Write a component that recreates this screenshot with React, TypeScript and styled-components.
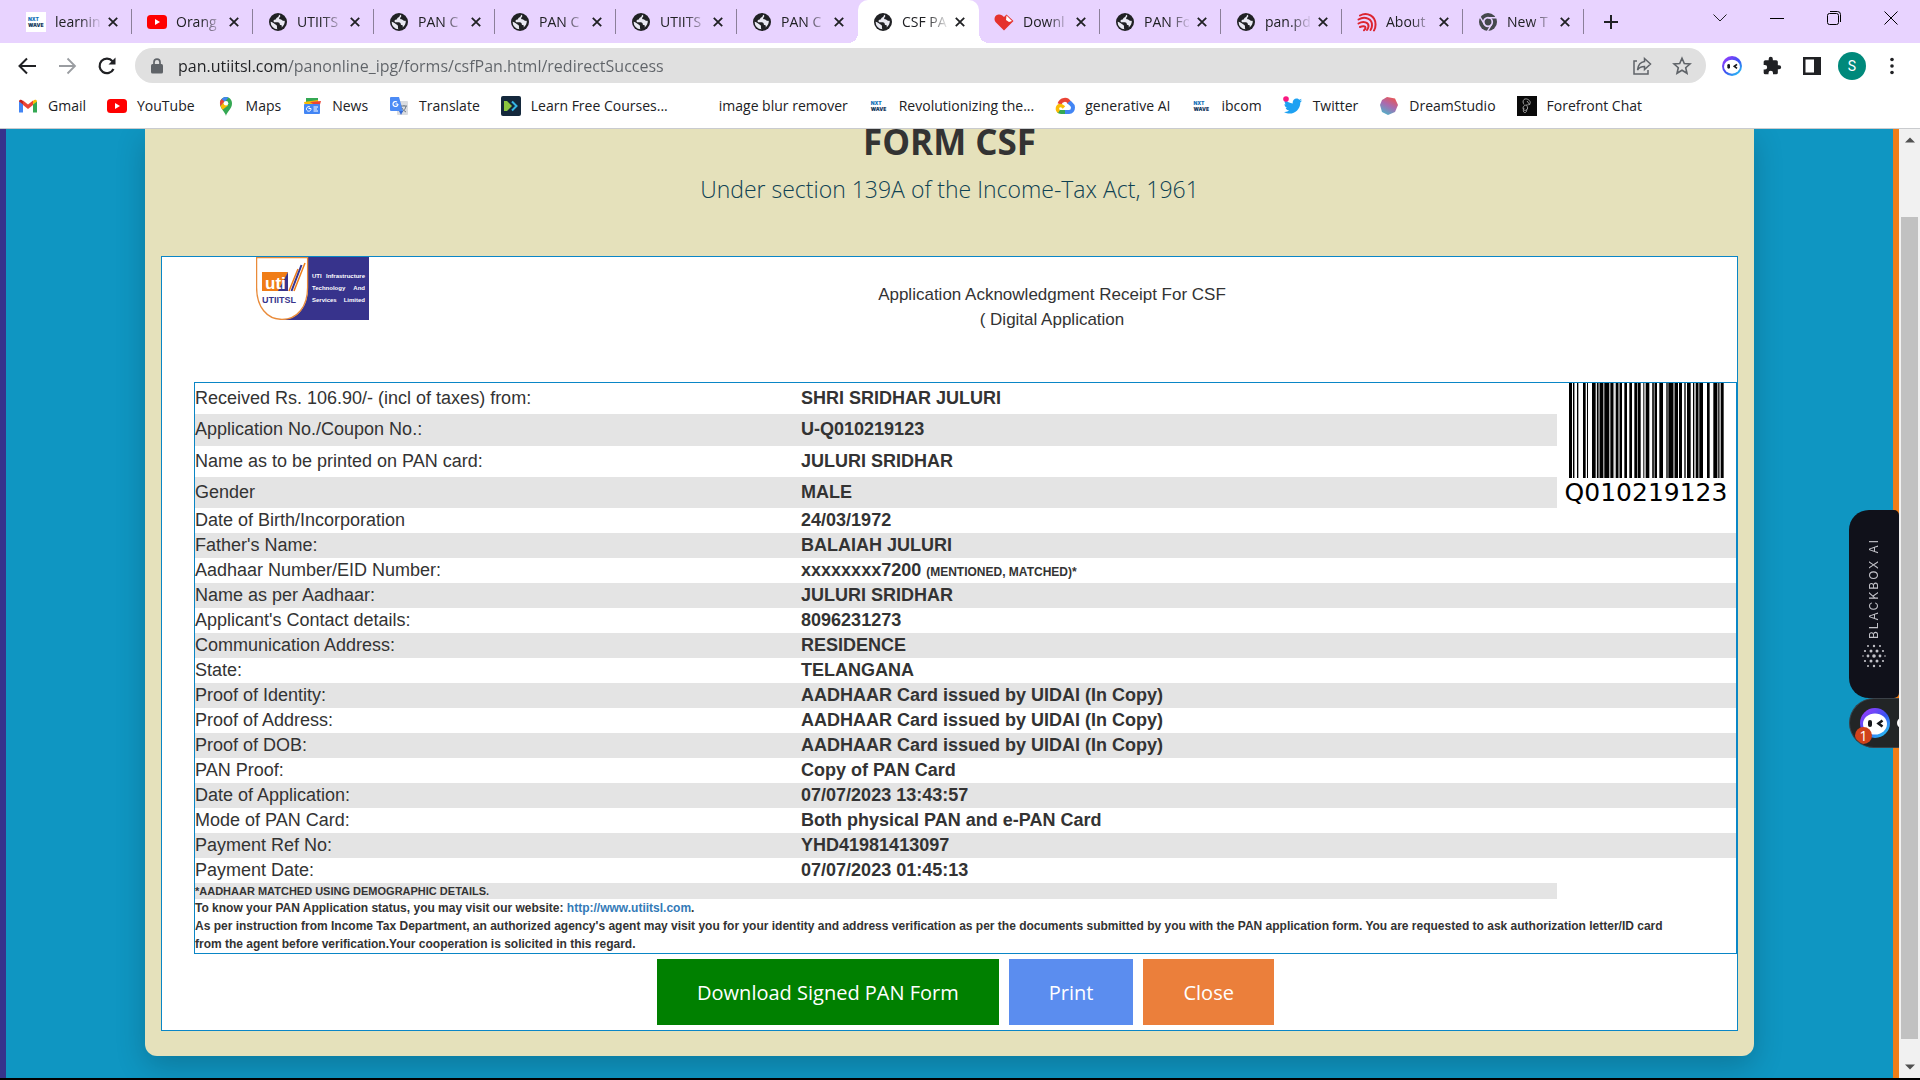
import React from "react";
import styled, { createGlobalStyle, css } from "styled-components";

const UI = `"Open Sans", "Noto Sans", sans-serif`;
const ARIAL = `"Liberation Sans", Arial, sans-serif`;

const GlobalStyle = createGlobalStyle`
  *, *::before, *::after { box-sizing: border-box; }
  body { margin: 0; background: #000; font-family: ${UI}; }
  button { font: inherit; border: 0; padding: 0; background: none; color: inherit; cursor: pointer; }
  svg { display: block; flex: none; }
`;

const Screen = styled.div`
  display: flex;
  flex-direction: column;
  height: 100vh;
  padding-bottom: 2px;
  overflow: hidden;
`;

/* ---------- browser chrome ---------- */

const TabStrip = styled.div`
  display: flex;
  height: 43px;
  padding-left: 11px;
  background: #e8d3ff;
  color: #202124;
`;

const Tab = styled.div<{ $active?: boolean; $divider?: boolean }>`
  display: flex;
  align-items: center;
  width: 121px;
  padding: 0 10px 0 15px;
  position: relative;
  font-size: 14px;
  ${(p) =>
    p.$divider &&
    css`
      &::after {
        content: "";
        position: absolute;
        right: 0;
        top: 9px;
        width: 1px;
        height: 25px;
        background: #8b7f99;
      }
    `}
  ${(p) =>
    p.$active &&
    css`
      background: #fff;
      border-radius: 10px 10px 0 0;
      &::before,
      &::after {
        content: "";
        position: absolute;
        bottom: 0;
        width: 10px;
        height: 10px;
      }
      &::before {
        left: -10px;
        background: radial-gradient(circle at 0 0, transparent 10px, #fff 10px);
      }
      &::after {
        right: -10px;
        background: radial-gradient(circle at 100% 0, transparent 10px, #fff 10px);
      }
    `}
`;

const TabTitle = styled.span`
  flex: 1;
  min-width: 0;
  margin: 0 4px 0 9px;
  line-height: 20px;
  white-space: nowrap;
  mask-image: linear-gradient(90deg, #000 55%, transparent 105%);
`;

const IconButton = styled.button<{ $size?: number }>`
  display: flex;
  align-items: center;
  justify-content: center;
  flex: none;
  width: ${(p) => p.$size ?? 20}px;
  height: ${(p) => p.$size ?? 20}px;
`;

const NewTab = styled(IconButton)`
  align-self: center;
  margin-left: 17px;
`;

const WindowControls = styled.div`
  display: flex;
  align-items: center;
  height: 36px;
  margin-left: auto;
  padding-right: 1px;
`;

const WindowButton = styled.button`
  display: flex;
  align-items: center;
  justify-content: center;
  width: 57px;
  height: 36px;
`;

const Toolbar = styled.div`
  display: flex;
  align-items: center;
  height: 45px;
  padding: 0 18px 0 17px;
  background: #fff;
  color: #202124;
`;

const NavButtons = styled.div`
  display: flex;
  gap: 20px;
  margin-right: 18px;
`;

const AddressBar = styled.form`
  display: flex;
  align-items: center;
  flex: 1;
  height: 35px;
  padding: 0 14px 0 15px;
  gap: 20px;
  border-radius: 18px;
  background: #e0e0e0;
  color: #5f6368;
`;

const AddressInput = styled.input`
  flex: 1;
  min-width: 0;
  height: 30px;
  margin-left: -6px;
  padding: 0;
  border: 0;
  outline: 0;
  font: 16px/24px ${UI};
  color: #5f6368;
  background: linear-gradient(90deg, #202124 111px, #5f6368 111px);
  -webkit-background-clip: text;
  background-clip: text;
  -webkit-text-fill-color: transparent;
`;

const Extensions = styled.div`
  display: flex;
  align-items: center;
  gap: 20px;
  margin-left: 16px;
`;

const Avatar = styled.button`
  width: 28px;
  height: 28px;
  margin: 0 -4px;
  border-radius: 50%;
  background: #00897b;
  color: #fff;
  font-family: Roboto, sans-serif;
  font-size: 14px;
`;

const Bookmarks = styled.nav`
  display: flex;
  align-items: center;
  height: 41px;
  padding: 0 18px 5px;
  gap: 21px;
  border-bottom: 1px solid #c9cbce;
  background: #fff;
`;

const Bookmark = styled.a`
  display: flex;
  align-items: center;
  gap: 10px;
  font-size: 14px;
  line-height: 20px;
  color: #202124;
  text-decoration: none;
  white-space: nowrap;
`;

const BlankIcon = styled.span`
  width: 20px;
  height: 20px;
`;

/* ---------- page ---------- */

const Viewport = styled.div`
  display: flex;
  flex: 1;
  min-height: 0;
  position: relative;
`;

const Page = styled.main`
  flex: 1;
  min-width: 0;
  overflow: hidden;
  padding: 0 139px;
  border-left: 6px solid #37338c;
  border-right: 6px solid #f07d17;
  background: #0f96c2;
  color: #333;
`;

const Card = styled.section`
  padding: 1px 16px 25px;
  border-radius: 0 0 12px 12px;
  background: #e5e1bb;
  box-shadow: 0 10px 30px rgba(0, 0, 0, 0.2);
`;

const Title = styled.h1`
  margin: 0;
  font-size: 35px;
  font-weight: 700;
  line-height: 24px;
  text-align: center;
`;

const Subtitle = styled.p`
  margin: 15px 0 47px;
  font-size: 23px;
  font-weight: 300;
  line-height: 40px;
  text-align: center;
  color: #0f4253;
`;

const Receipt = styled.div`
  padding-left: 32px;
  border: 1px solid #0a86c6;
  background: #fff;
  font-family: ${ARIAL};
`;

const ReceiptHeader = styled.header`
  display: flex;
  height: 125px;
`;

const LogoBox = styled.div`
  width: 173px;
  padding-left: 62px;
`;

const ReceiptTitle = styled.div`
  flex: 1;
  padding-top: 25px;
  font-size: 17px;
  line-height: 25px;
  text-align: center;
`;

const Details = styled.div`
  border: 1px solid #0a86c6;
`;

const Table = styled.table`
  width: 100%;
  border-collapse: collapse;
  table-layout: fixed;
  font-size: 18px;
  line-height: 25px;
`;

const LabelCol = styled.col`
  width: 39.33%;
`;
const BarcodeCol = styled.col`
  width: 179px;
`;

const Row = styled.tr<{ $tall?: boolean }>`
  height: ${(p) => (p.$tall ? 31 : 25)}px;
`;

const shade = css<{ $shaded?: boolean }>`
  padding: 0;
  text-align: left;
  background: ${(p) => (p.$shaded ? "#e4e4e4" : "#fff")};
`;

const Label = styled.th<{ $shaded?: boolean }>`
  ${shade}
  font-weight: 400;
`;

const Value = styled.td<{ $shaded?: boolean }>`
  ${shade}
  font-weight: 700;
`;

const Small = styled.small`
  font-size: 12px;
  line-height: 12px;
`;

const BarcodeCell = styled.td`
  padding: 0 8px 0 7px;
  vertical-align: top;
  text-align: center;
`;

const Barcode = styled.figure`
  display: flex;
  flex-direction: column;
  align-items: center;
  margin: 0;
  font: 25px/30px "DejaVu Sans", sans-serif;
  color: #000;
`;

const Strip = styled.td`
  padding: 0;
  background: #e4e4e4;
  font-size: 11px;
  font-weight: 700;
  line-height: 16px;
`;

const Note = styled.p`
  margin: 0;
  font-size: 12px;
  font-weight: 700;
  line-height: 18px;
  a {
    color: #337ab7;
    text-decoration: none;
  }
`;

const Actions = styled.div`
  display: flex;
  justify-content: center;
  gap: 10px;
  padding: 5px 0;
`;

const ActionButton = styled.button<{ $color: string }>`
  height: 66px;
  padding: 0 40px;
  background: ${(p) => p.$color};
  color: #fff;
  font-family: ${UI};
  font-size: 20px;
`;

const ScrollTrack = styled.div`
  display: flex;
  flex-direction: column;
  align-items: center;
  width: 21px;
  padding: 8px 2px;
  background: #f1f1f1;
`;

const ScrollThumb = styled.div`
  width: 17px;
  flex: 1;
  margin: 74px 0 25px;
  background: #c1c1c1;
`;

/* ---------- floating widgets ---------- */

const Widgets = styled.aside`
  position: absolute;
  right: 21px;
  top: 381px;
  width: 50px;
`;

const BlackboxTab = styled.button`
  display: flex;
  flex-direction: column;
  align-items: center;
  gap: 5px;
  width: 50px;
  height: 188px;
  padding-top: 28px;
  border-radius: 20px 5px 5px 20px;
  background: #10111a;
  color: #c3c3c9;
`;

const BlackboxLabel = styled.span`
  writing-mode: vertical-rl;
  transform: rotate(180deg);
  font: 12px/14px Inter, sans-serif;
  letter-spacing: 2px;
`;

const ChatTab = styled.button`
  display: flex;
  align-items: center;
  position: relative;
  width: 50px;
  height: 50px;
  padding-left: 10px;
  overflow: hidden;
  border: 1px solid #3b4148;
  border-right: 0;
  border-radius: 25px 0 0 25px;
  background: #222526;
  &::after {
    content: "";
    position: absolute;
    right: -7px;
    top: 19px;
    width: 9px;
    height: 10px;
    border-radius: 50%;
    background: #fff;
  }
`;

const ChatBadge = styled.span`
  position: absolute;
  left: 5px;
  top: 28px;
  width: 17px;
  height: 17px;
  border-radius: 50%;
  background: #d0421b;
  color: #fff;
  font: 14px/17px ${UI};
  text-align: center;
`;

/* ---------- drawings ---------- */

const Globe = () => (
  <svg width="20" height="20" viewBox="0 0 20 20">
    <circle cx="10" cy="10" r="9" fill="#202124" />
    <path d="M11.2 2.8c-.8 1.4-.4 2.2-2 2.6-1.4.4-.6 1.8-1.8 2.2-1.2.3-2 .6-1.8 1.8.4 1.4 3.4.4 5 1 1.800.8.6 2.4 2.2 2.6 1.2.2 1.2 1.2.8 2.4a8 8 0 0 0 3.2-6.6c-1 .4-2.400-.2-3-.8-.8-.8-2-.4-2.600-1.200-.6-1 .9-1.200 1-2.200 0-.8.400-1.200-1-1.800Z" fill="#e9e9f2" />
    <path d="M2.600 9.800c1 .2 3 1 4.200 2.200 1 1 2.200 1 2.200 2.400 0 1.200-.2 1.800.6 2.900a7.400 7.400 0 0 1-7-7.500Z" fill="#e9e9f2" />
  </svg>
);

const YouTube = () => (
  <svg width="20" height="20" viewBox="0 0 20 20">
    <rect y="3" width="20" height="14" rx="3.500" fill="#f00" />
    <path d="m8 7 5 3-5 3Z" fill="#fff" />
  </svg>
);

const WaveText = styled.span`
  display: flex;
  flex-direction: column;
  justify-content: center;
  flex: none;
  width: 20px;
  height: 20px;
  padding-left: 2px;
  background: #fff;
  font: 900 5px/6px Inter, sans-serif;
  color: #173a5e;
  b {
    color: #1673b9;
  }
`;

const NxtWave = () => (
  <WaveText>
    <b>NXT</b>
    <span>WAVE</span>
  </WaveText>
);

const HeartPdf = () => (
  <svg width="20" height="20" viewBox="0 0 20 20">
    <path d="M10 18.500 1.500 10C-.5 7.500.5 3 4.500 2.500c2.500-.3 4 1 5.500 2.500l2.500-2.500L19.500 9Z" fill="#e5322d" />
    <path d="m12.500 3.500 5.500 5.500-3 1-3-2Z" fill="#fff" />
  </svg>
);

const Airtel = () => (
  <svg width="20" height="20" viewBox="0 0 20 20" fill="none" stroke="#dc2430" strokeLinecap="round" strokeWidth="2">
    <path d="M3 3.500C10-.5 19 4 18.500 13c0 2-.5 4-1.500 5.500" />
    <path d="M1.500 7.500C8 3.500 15.500 7 15 13.500c0 1.500-.5 3-1.500 4.500" />
    <path d="M1.500 11.500c5-3 10.500-1 10 3-.2 1.500-.8 2.500-1.500 3.500" />
    <path d="M3 15c3-1.500 5.500-.8 5.500.8 0 1-.5 1.700-1.500 2.500" />
  </svg>
);

const ChromeIcon = () => (
  <svg width="20" height="20" viewBox="0 0 20 20">
    <circle cx="10" cy="10" r="9" fill="#45484c" />
    <circle cx="10" cy="10" r="4.300" fill="#45484c" stroke="#e8d3ff" strokeWidth="1.700" />
    <path d="M10 5.700h8.200M6.300 12.200 2.200 5.200M13.700 12.200l-4.200 7" stroke="#e8d3ff" strokeWidth="1.400" />
    <circle cx="10" cy="10" r="2.600" fill="#45484c" />
  </svg>
);

const CloseX = () => (
  <svg width="10" height="10" viewBox="0 0 10 10" stroke="#202124" strokeWidth="1.800">
    <path d="m.8.800 8.400 8.400M9.200.800.800 9.200" />
  </svg>
);

const Gmail = () => (
  <svg width="20" height="20" viewBox="0 0 20 20">
    <path d="M1 5v11.500h4V8Z" fill="#4285f4" />
    <path d="M19 5v11.500h-4V8Z" fill="#34a853" />
    <path d="M1 5.500 5 8.500V5C3.500 3 1 3.500 1 5.500Z" fill="#c5221f" />
    <path d="M19 5.500 15 8.500V5c1.500-2 4-1.500 4 .5Z" fill="#fbbc04" />
    <path d="m5 4.500 5 4 5-4v4.500l-5 4-5-4Z" fill="#ea4335" />
  </svg>
);

const MapsPin = () => (
  <svg width="20" height="20" viewBox="0 0 20 20">
    <path d="M10 20c-.6-4-6-7-6-12.500C4 3.500 6.800 1 10 1s6 2.500 6 6.500C16 13 10.600 16 10 20Z" fill="#34a853" />
    <path d="M5.500 3.200C6.800 1.800 8.300 1 10 1c1 0 1.800.2 2.500.5L5 10C4 8 3.500 5.500 5.500 3.200Z" fill="#4285f4" />
    <path d="M5.500 3 8.500 5.500 4.600 10C3.500 8 3.600 5 5.500 3Z" fill="#ea4335" />
    <path d="m12 9.500-5.400 4.200c-.9-1.200-1.600-2.300-2-3.700L8 6Z" fill="#fbbc04" />
    <circle cx="10" cy="7.300" r="2.300" fill="#fff" />
  </svg>
);

const NewsIcon = () => (
  <svg width="20" height="20" viewBox="0 0 20 20">
    <rect x="4" y="2" width="12" height="8" fill="#34a853" />
    <path d="m2 6 14-2 1 6H3Z" fill="#fbbc04" />
    <path d="m8 6 11-1-2 7Z" fill="#ea4335" />
    <rect x="2" y="8" width="16" height="10" rx="1" fill="#4285f4" />
    <path d="M9 12.500H6.500M9 12.500A2.300 2.300 0 1 1 8 11M11.500 11H16M11.500 13H15M11.500 15H16" stroke="#fff" fill="none" />
  </svg>
);

const TranslateIcon = () => (
  <svg width="20" height="20" viewBox="0 0 20 20" fill="none">
    <rect x="8" y="5" width="11" height="14" rx="1" fill="#dadce0" />
    <path d="M2 1h8l4 14H2a1 1 0 0 1-1-1V2a1 1 0 0 1 1-1Z" fill="#4c8bf5" />
    <path d="M9 8H6.500M9 8a2.500 2.500 0 1 1-1-2" stroke="#fff" strokeWidth="1.200" />
    <path d="M12 10h6M15 9v1M17 10c-.5 3-2 4.500-4 6M13 12c1 2 2.500 3 4 4" stroke="#6f7a86" />
    <path d="m10 15h4l-2 4Z" fill="#3367d6" />
  </svg>
);

const CoursesIcon = () => (
  <svg width="20" height="20" viewBox="0 0 20 20">
    <rect width="20" height="20" rx="2" fill="#14283c" />
    <path d="M3 5h3l5 5-5 5H3Z" fill="#8bc53f" />
    <path d="m11 5.500 4.500 4.500-4.500 4.500" fill="none" stroke="#35b6e6" strokeWidth="2" />
  </svg>
);

const CloudIcon = () => (
  <svg width="20" height="20" viewBox="0 0 20 20" fill="none" strokeWidth="4">
    <path d="M4.500 8C6 3.500 12 2 14.500 7" stroke="#ea4335" />
    <path d="M14 6c1.500 2 4 2.500 4 5.500 0 2.500-1.500 4.500-4 4.500h-4" stroke="#4285f4" />
    <path d="M10 16H6c-1 0-2-.3-2.500-.8" stroke="#34a853" />
    <path d="M4 15.500C1.500 14 2 9.500 5.500 9.500c1.500 0 2.500 1 3.500 2" stroke="#fbbc04" strokeWidth="3.500" />
  </svg>
);

const TwitterIcon = () => (
  <svg width="20" height="20" viewBox="0 0 20 20">
    <path d="M1 16c2.200.2 3.800-.3 5.200-1.400-1.700-.1-3-1.100-3.500-2.600h1.600C2.600 11.400 1.500 10 1.500 8l1.600.5C1.600 7.300 1.200 5.300 2.100 3.600 4.100 6 6.800 7.300 9.800 7.500 9.200 4.800 11 2.500 13.500 2.500c1.100 0 2.100.5 2.800 1.200l2.400-.9-1.600 2.100 2.100-.5-1.900 2C17.500 14.500 9 20.500 1 16Z" fill="#1da1f2" />
    <circle cx="3" cy="3" r="2.800" fill="#f91880" />
  </svg>
);

const DreamIcon = () => (
  <svg width="20" height="20" viewBox="0 0 20 20">
    <defs>
      <linearGradient id="dream" x1="0.800" y1="0" x2="0.300" y2="1">
        <stop offset="0" stopColor="#f0524b" />
        <stop offset="0.500" stopColor="#a86bb0" />
        <stop offset="1" stopColor="#4fb3c9" />
      </linearGradient>
    </defs>
    <path d="m8 1 8 1.500L19 9l-3 7-7 3-6-3-2-7 2-5Z" fill="url(#dream)" />
  </svg>
);

const ForefrontIcon = () => (
  <svg width="20" height="20" viewBox="0 0 20 20">
    <rect width="20" height="20" fill="#0a0a0a" />
    <path d="M7 3.500c2-1.500 5 0 6 2s-1 3.500-3 3.500-4 1-4 3 2 3 3.500 2 1.500-3 0-4.500M7 3.500C5.500 5 6 7 7 8.500M10 5l3 4M7 12c-1 2-1 4 .5 4.500S10 15 9.500 13.500" fill="none" stroke="#a0a0a0" strokeWidth="1" />
  </svg>
);

const FaceIcon = ({ size = 20, id }: { size?: number; id: string }) => (
  <svg width={size} height={size} viewBox="0 0 30 30">
    <defs>
      <linearGradient id={id} x1="0.200" y1="0.100" x2="0.900" y2="0.900">
        <stop offset="0" stopColor="#8a3ffc" />
        <stop offset="0.500" stopColor="#3b52f0" />
        <stop offset="1" stopColor="#27c4f5" />
      </linearGradient>
    </defs>
    <circle cx="15" cy="15" r="15" fill={`url(#${id})`} />
    <ellipse cx="15" cy="16" rx="12" ry="10.500" fill="#fff" />
    <rect x="8" y="12" width="4" height="7" rx="2" fill="#15171c" />
    <path d="m22.500 12.500-4 3 4 3" fill="none" stroke="#15171c" strokeWidth="2.600" />
  </svg>
);

const UtiLogo = () => (
  <svg width="113" height="63" viewBox="0 0 113 63" role="img" aria-label="UTIITSL">
    <rect width="113" height="63" fill="#37338c" />
    <path d="M0 0h52v30C52 50 42 62.500 26 62.500V63H0Z" fill="#fff" />
    <path d="M.6.500h51v30C51.600 50 41 62.400 26 62.400S.6 50 .6 30.500Z" fill="#fff" stroke="#e98b3a" strokeWidth="1.300" />
    <path d="M6 15h26L24 34H6Z" fill="#f07d17" />
    <path d="M32 15v19H22Z" fill="#37338c" />
    <path d="M33 34 42 12M38 34 49 6" stroke="#f07d17" strokeWidth="1.500" />
    <path d="m35.500 34 10-26" stroke="#37338c" strokeWidth="2" />
    <g fontFamily="Liberation Sans" fontWeight="700">
      <text x="9" y="32" fontSize="17" fill="#fff">uti</text>
      <text x="6" y="46" fontSize="9" fill="#37338c">UTIITSL</text>
      <g fontSize="6" fill="#fff">
        <text x="56" y="21">UTI</text>
        <text x="109" y="21" textAnchor="end">Infrastructure</text>
        <text x="56" y="33">Technology</text>
        <text x="109" y="33" textAnchor="end">And</text>
        <text x="56" y="45">Services</text>
        <text x="109" y="45" textAnchor="end">Limited</text>
      </g>
    </g>
  </svg>
);

/* [start, width] of each bar, three units to a pixel */
const BARS = [
  [0, 9], [12, 4], [24, 4], [42, 8], [54, 3], [69, 11], [84, 4], [92, 10], [106, 15], [124, 9],
  [140, 8], [152, 7], [166, 8], [181, 8], [196, 8], [207, 8], [223, 3], [230, 11], [250, 4],
  [257, 7], [271, 11], [292, 4], [298, 15], [317, 10], [330, 9], [346, 4], [354, 11], [372, 4],
  [380, 8], [391, 11], [414, 8], [433, 11], [448, 3], [455, 9],
];
const GREY_BARS = [[12, 4], [83, 9], [102, 4], [133, 3], [148, 4], [204, 3], [250, 7], [313, 4], [388, 3], [444, 8]];

const BarcodeArt = () => (
  <svg width="155" height="95" viewBox="0 0 465 285" preserveAspectRatio="none" aria-hidden="true">
    {GREY_BARS.map(([x, w]) => (
      <rect key={`g${x}`} x={x} width={w} height="285" fill="#999" />
    ))}
    {BARS.map(([x, w]) => (
      <rect key={x} x={x} width={w} height="285" fill="#000" />
    ))}
  </svg>
);

const DOTS: [number, number, number][] = [
  [6, 2, 1], [12, 2, 1.2], [18, 2, 1],
  [3, 7, 1.1], [9, 7, 1.5], [15, 7, 1.5], [21, 7, 1.1],
  [1, 12, 0.8], [6, 12, 1.4], [12, 12, 1.8], [18, 12, 1.4], [23, 12, 0.8],
  [3, 17, 1.1], [9, 17, 1.5], [15, 17, 1.5], [21, 17, 1.1],
  [6, 22, 1], [12, 22, 1.2], [18, 22, 1],
];

/* ---------- data ---------- */

const TABS = [
  { title: "learnin", icon: <NxtWave /> },
  { title: "Orang", icon: <YouTube /> },
  { title: "UTIITS", icon: <Globe /> },
  { title: "PAN C", icon: <Globe /> },
  { title: "PAN C", icon: <Globe /> },
  { title: "UTIITS", icon: <Globe /> },
  { title: "PAN C", icon: <Globe /> },
  { title: "CSF PA", icon: <Globe />, active: true },
  { title: "Downl", icon: <HeartPdf /> },
  { title: "PAN Fo", icon: <Globe /> },
  { title: "pan.pd", icon: <Globe /> },
  { title: "About", icon: <Airtel /> },
  { title: "New T", icon: <ChromeIcon /> },
];

const BOOKMARKS = [
  { title: "Gmail", icon: <Gmail /> },
  { title: "YouTube", icon: <YouTube /> },
  { title: "Maps", icon: <MapsPin /> },
  { title: "News", icon: <NewsIcon /> },
  { title: "Translate", icon: <TranslateIcon /> },
  { title: "Learn Free Courses...", icon: <CoursesIcon /> },
  { title: "image blur remover", icon: <BlankIcon /> },
  { title: "Revolutionizing the...", icon: <NxtWave /> },
  { title: "generative AI", icon: <CloudIcon /> },
  { title: "ibcom", icon: <NxtWave /> },
  { title: "Twitter", icon: <TwitterIcon /> },
  { title: "DreamStudio", icon: <DreamIcon /> },
  { title: "Forefront Chat", icon: <ForefrontIcon /> },
];

const TOP_ROWS = [
  ["Received Rs. 106.90/- (incl of taxes) from:", "SHRI SRIDHAR JULURI"],
  ["Application No./Coupon No.:", "U-Q010219123"],
  ["Name as to be printed on PAN card:", "JULURI SRIDHAR"],
  ["Gender", "MALE"],
];

const ROWS: [string, React.ReactNode][] = [
  ["Date of Birth/Incorporation", "24/03/1972"],
  ["Father's Name:", "BALAIAH JULURI"],
  ["Aadhaar Number/EID Number:", <>xxxxxxxx7200 <Small>(MENTIONED, MATCHED)*</Small></>],
  ["Name as per Aadhaar:", "JULURI SRIDHAR"],
  ["Applicant's Contact details:", "8096231273"],
  ["Communication Address:", "RESIDENCE"],
  ["State:", "TELANGANA"],
  ["Proof of Identity:", "AADHAAR Card issued by UIDAI (In Copy)"],
  ["Proof of Address:", "AADHAAR Card issued by UIDAI (In Copy)"],
  ["Proof of DOB:", "AADHAAR Card issued by UIDAI (In Copy)"],
  ["PAN Proof:", "Copy of PAN Card"],
  ["Date of Application:", "07/07/2023 13:43:57"],
  ["Mode of PAN Card:", "Both physical PAN and e-PAN Card"],
  ["Payment Ref No:", "YHD41981413097"],
  ["Payment Date:", "07/07/2023 01:45:13"],
];

export default function App() {
  return (
    <Screen>
      <GlobalStyle />
      <TabStrip>
        {TABS.map((t, i) => (
          <Tab key={i} $active={t.active} $divider={!t.active && !TABS[i + 1]?.active}>
            {t.icon}
            <TabTitle>{t.title}</TabTitle>
            <IconButton aria-label="Close tab" $size={18}><CloseX /></IconButton>
          </Tab>
        ))}
        <NewTab aria-label="New tab">
          <svg width="16" height="16" viewBox="0 0 16 16" stroke="#202124" strokeWidth="2">
            <path d="M8 1v14M1 8h14" />
          </svg>
        </NewTab>
        <WindowControls>
          <WindowButton aria-label="Search tabs">
            <svg width="14" height="8" viewBox="0 0 14 8" fill="none" stroke="#202124"><path d="m.5.500 6.500 6.500L13.500.500" /></svg>
          </WindowButton>
          <WindowButton aria-label="Minimize">
            <svg width="14" height="14" viewBox="0 0 14 14" stroke="#000"><path d="M0 7.500h14" /></svg>
          </WindowButton>
          <WindowButton aria-label="Restore">
            <svg width="14" height="14" viewBox="0 0 14 14" fill="none" stroke="#000">
              <rect x=".5" y="2.500" width="11" height="11" rx="2" />
              <path d="M3 .5h7.500a3 3 0 0 1 3 3V11" />
            </svg>
          </WindowButton>
          <WindowButton aria-label="Close window">
            <svg width="14" height="14" viewBox="0 0 14 14" stroke="#000"><path d="m.5.500 13 13M13.500.500l-13 13" /></svg>
          </WindowButton>
        </WindowControls>
      </TabStrip>

      <Toolbar>
        <NavButtons>
          <IconButton aria-label="Back">
            <svg width="20" height="20" viewBox="0 0 20 20" fill="none" stroke="#202124" strokeWidth="2"><path d="M19 10H3M10 2.500 2.500 10l7.500 7.500" /></svg>
          </IconButton>
          <IconButton aria-label="Forward">
            <svg width="20" height="20" viewBox="0 0 20 20" fill="none" stroke="#9a9da1" strokeWidth="1.800"><path d="M2 10h15M10.500 2.500 18 10l-7.500 7.500" /></svg>
          </IconButton>
          <IconButton aria-label="Reload">
            <svg width="20" height="20" viewBox="0 0 20 20" fill="none" stroke="#202124" strokeWidth="2.200">
              <path d="M16.500 13A7.300 7.300 0 1 1 15.500 5.200" />
              <path d="M18.500 1.500v7h-7Z" fill="#202124" stroke="none" />
            </svg>
          </IconButton>
        </NavButtons>
        <AddressBar onSubmit={(e) => e.preventDefault()}>
          <svg width="14" height="16" viewBox="0 0 14 16" fill="none">
            <rect x="1" y="6" width="12" height="9.500" rx="1.500" fill="#5f6368" />
            <path d="M4 7V4.200a3 3 0 0 1 6 0V7" stroke="#5f6368" strokeWidth="1.700" />
          </svg>
          <AddressInput aria-label="Address" defaultValue="pan.utiitsl.com/panonline_ipg/forms/csfPan.html/redirectSuccess" />
          <IconButton type="button" aria-label="Share">
            <svg width="20" height="20" viewBox="0 0 20 20" fill="none" stroke="#5f6368" strokeWidth="1.500">
              <path d="M5 5H2v13h14v-4" />
              <path d="M12.500 2.500 18.500 8l-6 5.500v-3c-3.500 0-5.500 1-7 3.500.5-4.500 3-8 7-8.500Z" />
            </svg>
          </IconButton>
          <IconButton type="button" aria-label="Bookmark this tab">
            <svg width="20" height="20" viewBox="0 0 20 20" fill="none" stroke="#5f6368" strokeWidth="1.600">
              <path d="m10 2.300 2.300 5.200 5.700.5-4.300 3.700 1.300 5.600-5-3-5 3 1.300-5.600L2 8l5.700-.5Z" />
            </svg>
          </IconButton>
        </AddressBar>
        <Extensions>
          <IconButton aria-label="Blackbox"><FaceIcon id="faceSmall" /></IconButton>
          <IconButton aria-label="Extensions">
            <svg width="20" height="20" viewBox="0 0 24 24" fill="#202124">
              <path d="M20.500 11H19V7a2 2 0 0 0-2-2h-4V3.500a2.500 2.500 0 0 0-5 0V5H4a2 2 0 0 0-2 2v3.800h1.500a2.700 2.700 0 0 1 0 5.400H2V20a2 2 0 0 0 2 2h3.800v-1.500a2.700 2.700 0 0 1 5.400 0V22H17a2 2 0 0 0 2-2v-4h1.500a2.500 2.500 0 0 0 0-5Z" />
            </svg>
          </IconButton>
          <IconButton aria-label="Side panel">
            <svg width="18" height="18" viewBox="0 0 18 18"><path d="M0 0h18v18H0Z" fill="#202124" /><path d="M2.500 2.500H11v13H2.500Z" fill="#fff" /></svg>
          </IconButton>
          <Avatar aria-label="Profile">S</Avatar>
          <IconButton aria-label="Menu">
            <svg width="20" height="20" viewBox="0 0 20 20" fill="#202124"><circle cx="10" cy="3.500" r="1.800" /><circle cx="10" cy="10" r="1.800" /><circle cx="10" cy="16.500" r="1.800" /></svg>
          </IconButton>
        </Extensions>
      </Toolbar>

      <Bookmarks>
        {BOOKMARKS.map((b) => (
          <Bookmark key={b.title} href="#">
            {b.icon}
            {b.title}
          </Bookmark>
        ))}
      </Bookmarks>

      <Viewport>
        <Page>
          <Card>
            <Title>FORM CSF</Title>
            <Subtitle>Under section 139A of the Income-Tax Act, 1961</Subtitle>
            <Receipt>
              <ReceiptHeader>
                <LogoBox><UtiLogo /></LogoBox>
                <ReceiptTitle>
                  Application Acknowledgment Receipt For CSF
                  <br />( Digital Application
                </ReceiptTitle>
              </ReceiptHeader>
              <Details>
                <Table>
                  <colgroup>
                    <LabelCol />
                    <col />
                    <BarcodeCol />
                  </colgroup>
                  <tbody>
                    {TOP_ROWS.map(([label, value], i) => (
                      <Row key={label} $tall>
                        <Label scope="row" $shaded={i % 2 === 1}>{label}</Label>
                        <Value $shaded={i % 2 === 1}>{value}</Value>
                        {i === 0 && (
                          <BarcodeCell rowSpan={4}>
                            <Barcode>
                              <BarcodeArt />
                              <figcaption>Q010219123</figcaption>
                            </Barcode>
                          </BarcodeCell>
                        )}
                      </Row>
                    ))}
                    {ROWS.map(([label, value], i) => (
                      <Row key={label}>
                        <Label scope="row" $shaded={i % 2 === 1}>{label}</Label>
                        <Value colSpan={2} $shaded={i % 2 === 1}>{value}</Value>
                      </Row>
                    ))}
                    <tr>
                      <Strip colSpan={2}>*AADHAAR MATCHED USING DEMOGRAPHIC DETAILS.</Strip>
                    </tr>
                  </tbody>
                </Table>
                <Note>
                  To know your PAN Application status, you may visit our website: <a href="#">http://www.utiitsl.com</a>.
                </Note>
                <Note>
                  As per instruction from Income Tax Department, an authorized agency's agent may visit you for your identity and address
                  verification as per the documents submitted by you with the PAN application form. You are requested to ask authorization
                  letter/ID card
                  <br />
                  from the agent before verification.Your cooperation is solicited in this regard.
                </Note>
              </Details>
              <Actions>
                <ActionButton $color="#008000">Download Signed PAN Form</ActionButton>
                <ActionButton $color="#5b8def">Print</ActionButton>
                <ActionButton $color="#eb7f3b">Close</ActionButton>
              </Actions>
            </Receipt>
          </Card>
        </Page>
        <ScrollTrack>
          <svg width="10" height="6" viewBox="0 0 10 6"><path d="M0 5.500 5 .5l5 5Z" fill="#505050" /></svg>
          <ScrollThumb />
          <svg width="10" height="6" viewBox="0 0 10 6"><path d="M0 .5h10l-5 5Z" fill="#505050" /></svg>
        </ScrollTrack>
        <Widgets>
          <BlackboxTab>
            <BlackboxLabel>BLACKBOX AI</BlackboxLabel>
            <svg width="24" height="24" viewBox="0 0 24 24" fill="#c3c3c9">
              {DOTS.map(([x, y, r]) => (
                <circle key={`${x}-${y}`} cx={x} cy={y} r={r} />
              ))}
            </svg>
          </BlackboxTab>
          <ChatTab aria-label="Open chat">
            <FaceIcon size={30} id="faceLarge" />
            <ChatBadge>1</ChatBadge>
          </ChatTab>
        </Widgets>
      </Viewport>
    </Screen>
  );
}
